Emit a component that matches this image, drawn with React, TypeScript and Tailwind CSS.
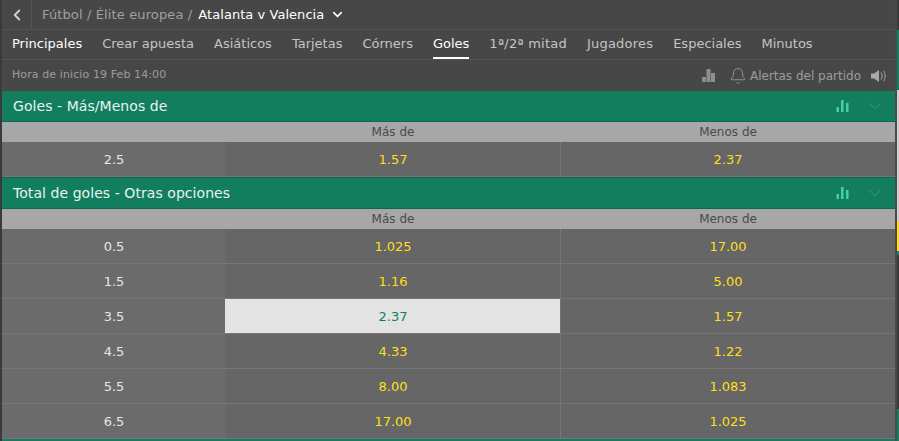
import { ChevronDown, ChevronLeft, Bell } from "lucide-react";

const tabs = ["Principales", "Crear apuesta", "Asiáticos", "Tarjetas", "Córners", "Goles", "1ª/2ª mitad", "Jugadores", "Especiales", "Minutos"];

const totals = [
  { line: "0.5", over: "1.025", under: "17.00" },
  { line: "1.5", over: "1.16", under: "5.00" },
  { line: "3.5", over: "2.37", under: "1.57", selected: true },
  { line: "4.5", over: "4.33", under: "1.22" },
  { line: "5.5", over: "8.00", under: "1.083" },
  { line: "6.5", over: "17.00", under: "1.025" },
];

function BarsIcon() {
  return (
    <svg width="13" height="12" viewBox="0 0 13 12" className="text-[#45d0a3]" fill="currentColor">
      <rect x="0.5" y="7" width="2.5" height="5" />
      <rect x="5" y="0" width="2.5" height="12" />
      <rect x="10" y="3" width="2.5" height="9" />
    </svg>
  );
}

function StatsIcon() {
  return (
    <svg width="13" height="13" viewBox="0 0 13 13" className="text-[#8d8d8d]" fill="currentColor">
      <rect x="0" y="8" width="4" height="5" />
      <rect x="4.5" y="0" width="4" height="13" />
      <rect x="9" y="4" width="4" height="9" />
    </svg>
  );
}

function SpeakerIcon() {
  return (
    <svg width="15" height="12" viewBox="0 0 15 12" className="text-[#a8a8a8]" fill="currentColor">
      <path d="M0 3.5h3l5-3.5v12l-5-3.5H0z" />
      <path d="M10 2.5c1.5 2 1.5 5 0 7M12.5 1c2.3 3 2.3 7 0 10" fill="none" stroke="currentColor" strokeWidth="1" />
    </svg>
  );
}

function SectionHeader({ title, topLine }: { title: string; topLine?: boolean }) {
  return (
    <div className={`flex items-center justify-between border-b border-[#0e6a4e] bg-[#127e5e] pl-[11px] pr-[9px] text-[14px] tracking-[0.06px] text-[#e8f3ef] ${topLine ? "h-[32px] border-t" : "h-[31px]"}`}>
      <span>{title}</span>
      <div className="flex items-center gap-[15px]">
        <BarsIcon />
        <ChevronDown size={22} strokeWidth={1} className="text-[#3b9c7f]" />
      </div>
    </div>
  );
}

function ColumnLabels() {
  return (
    <div className="grid h-5 grid-cols-[223px_336px_1fr] items-center bg-[#a7a7a7] text-[12px] text-[#4a4a4a]">
      <span />
      <span className="text-center">Más de</span>
      <span className="text-center">Menos de</span>
    </div>
  );
}

function OddsRow({ line, over, under, selected }: { line: string; over: string; under: string; selected?: boolean }) {
  return (
    <div className="grid h-[35px] grid-cols-[223px_336px_1fr] border-b border-[#767676] text-[13px]">
      <div className="flex items-center justify-center bg-[#6b6b6b] pl-[1px] pt-[2px] text-[#e6e6e6]">{line}</div>
      <div className={`flex items-center justify-center border-r border-[#767676] pl-[1px] pt-[2px] ${selected ? "bg-[#e3e3e3] text-[#127e5e]" : "bg-[#666666] text-[#ffdf1b]"}`}>{over}</div>
      <div className="flex items-center justify-center bg-[#666666] pt-[2px] text-[#ffdf1b]">{under}</div>
    </div>
  );
}

export default function App() {
  return (
    <div className="flex h-[441px] w-[899px] overflow-hidden bg-[#3a3a3a] font-['DejaVu_Sans',sans-serif]">
      <div className="w-[2px] shrink-0 bg-[#3a3a3a]" />
      <div className="flex w-[893px] shrink-0 flex-col bg-[#474747]">
        {/* Breadcrumb */}
        <div className="flex h-[30px] shrink-0 items-center border-b border-[#555555]">
          <div className="flex h-full w-[30px] items-center justify-center border-r border-[#555555]">
            <ChevronLeft size={18} strokeWidth={2.5} className="text-[#d0d0d0]" />
          </div>
          <div className="ml-[10px] flex items-center gap-[6px] text-[13px] text-[#a0a0a0]">
            <span className="tracking-[0.13px]">Fútbol / Élite europea /</span>
            <span className="tracking-[0.05px] text-white">Atalanta v Valencia</span>
            <ChevronDown size={15} strokeWidth={2.5} className="text-white" />
          </div>
        </div>

        {/* Tabs */}
        <div className="flex h-[30px] shrink-0 items-stretch gap-5 border-b border-[#555555] pl-[10px] text-[13px] text-[#c4c4c4]">
          {tabs.map((tab, i) => (
            <div
              key={tab}
              className={`flex items-center border-b-2 ${tab === "Goles" ? "border-white text-white" : "border-transparent"} ${i === 0 ? "text-white" : ""} ${tab === "1ª/2ª mitad" ? "tracking-[0.25px]" : ""} ${tab === "Jugadores" ? "tracking-[0.2px]" : ""}`}
            >
              {tab}
            </div>
          ))}
        </div>

        {/* Info bar */}
        <div className="flex h-[31px] shrink-0 items-center justify-between pl-[10px] pr-[9px] text-[11px] text-[#9c9c9c]">
          <span className="tracking-[0.1px]">Hora de inicio 19 Feb 14:00</span>
          <div className="flex items-center text-[12px]">
            <StatsIcon />
            <Bell size={18} strokeWidth={1} className="ml-[14px] text-[#a8a8a8]" />
            <span className="ml-[3px] mr-[10px]">Alertas del partido</span>
            <SpeakerIcon />
          </div>
        </div>

        <SectionHeader title="Goles - Más/Menos de" />
        <ColumnLabels />
        <OddsRow line="2.5" over="1.57" under="2.37" />

        <SectionHeader title="Total de goles - Otras opciones" topLine />
        <ColumnLabels />
        {totals.map((row) => (
          <OddsRow key={row.line} {...row} />
        ))}
        <div className="h-[2px] bg-[#127e5e]" />
      </div>

      {/* Scrollbar strip and the page behind it */}
      <div className="w-[2px] shrink-0 bg-[#4a4a4a]" />
      <div className="flex w-[2px] shrink-0 flex-col">
        <div className="h-[30px] bg-[#3a3a3a]" />
        <div className="h-[60px] bg-[#127e5e]" />
        <div className="h-[131px] bg-[#cfcfcf]" />
        <div className="h-[30px] bg-[#ffdf1b]" />
        <div className="h-[4px] bg-[#127e5e]" />
        <div className="h-[154px] bg-[#3a3a3a]" />
        <div className="h-[32px] bg-[#127e5e]" />
      </div>
    </div>
  );
}
